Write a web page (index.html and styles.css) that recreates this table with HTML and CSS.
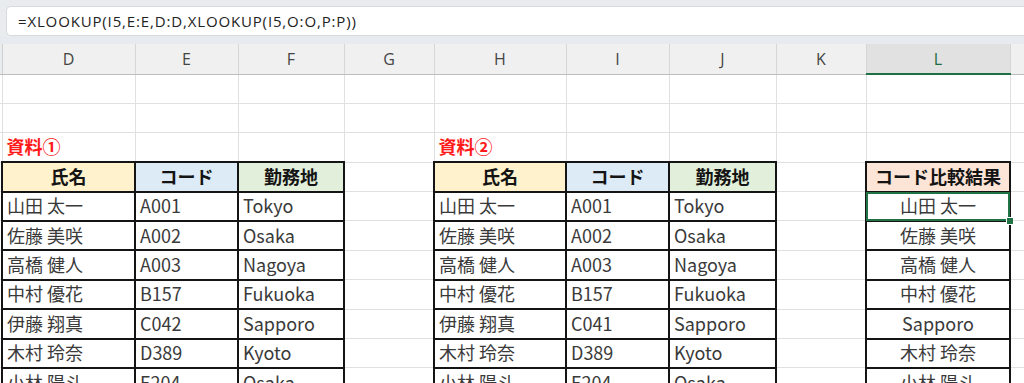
FILE: index.html
```html
<!DOCTYPE html>
<html lang="ja">
<head>
<meta charset="utf-8">
<title>XLOOKUP</title>
<link rel="stylesheet" href="styles.css">
</head>
<body>
<div class="formula-bar"><div class="formula-box">=XLOOKUP(I5,E:E,D:D,XLOOKUP(I5,O:O,P:P))</div></div>
<div class="band"></div>
<table class="sheet">
<colgroup>
<col class="w-edge"><col class="w-d"><col class="w-e"><col class="w-f"><col class="w-g"><col class="w-h"><col class="w-i"><col class="w-j"><col class="w-k"><col class="w-l"><col class="w-m">
</colgroup>
<thead>
<tr><th class="edge"></th><th>D</th><th>E</th><th>F</th><th>G</th><th>H</th><th>I</th><th>J</th><th>K</th><th class="sel">L</th><th></th></tr>
</thead>
<tbody>
<tr><td class="edge"></td><td></td><td></td><td></td><td></td><td></td><td></td><td></td><td></td><td></td><td></td></tr>
<tr><td class="edge"></td><td></td><td></td><td></td><td></td><td></td><td></td><td></td><td></td><td></td><td></td></tr>
<tr><td class="edge"></td><td class="lbl">資料①</td><td></td><td></td><td></td><td class="lbl">資料②</td><td></td><td></td><td></td><td></td><td></td></tr>
<tr><td class="edge"></td><td class="t hd hn">氏名</td><td class="t hd hc">コード</td><td class="t hd hl">勤務地</td><td></td><td class="t hd hn">氏名</td><td class="t hd hc">コード</td><td class="t hd hl">勤務地</td><td></td><td class="t hd hr">コード比較結果</td><td></td></tr>
<tr><td class="edge"></td><td class="t">山田 太一</td><td class="t">A001</td><td class="t">Tokyo</td><td></td><td class="t">山田 太一</td><td class="t">A001</td><td class="t">Tokyo</td><td></td><td class="t c active">山田 太一<div class="sel-box"></div><div class="handle"></div></td><td></td></tr>
<tr><td class="edge"></td><td class="t">佐藤 美咲</td><td class="t">A002</td><td class="t">Osaka</td><td></td><td class="t">佐藤 美咲</td><td class="t">A002</td><td class="t">Osaka</td><td></td><td class="t c">佐藤 美咲</td><td></td></tr>
<tr><td class="edge"></td><td class="t">高橋 健人</td><td class="t">A003</td><td class="t">Nagoya</td><td></td><td class="t">高橋 健人</td><td class="t">A003</td><td class="t">Nagoya</td><td></td><td class="t c">高橋 健人</td><td></td></tr>
<tr><td class="edge"></td><td class="t">中村 優花</td><td class="t">B157</td><td class="t">Fukuoka</td><td></td><td class="t">中村 優花</td><td class="t">B157</td><td class="t">Fukuoka</td><td></td><td class="t c">中村 優花</td><td></td></tr>
<tr><td class="edge"></td><td class="t">伊藤 翔真</td><td class="t">C042</td><td class="t">Sapporo</td><td></td><td class="t">伊藤 翔真</td><td class="t">C041</td><td class="t">Sapporo</td><td></td><td class="t c">Sapporo</td><td></td></tr>
<tr><td class="edge"></td><td class="t">木村 玲奈</td><td class="t">D389</td><td class="t">Kyoto</td><td></td><td class="t">木村 玲奈</td><td class="t">D389</td><td class="t">Kyoto</td><td></td><td class="t c">木村 玲奈</td><td></td></tr>
<tr><td class="edge"></td><td class="t">小林 陽斗</td><td class="t">E204</td><td class="t">Osaka</td><td></td><td class="t">小林 陽斗</td><td class="t">E204</td><td class="t">Osaka</td><td></td><td class="t c">小林 陽斗</td><td></td></tr>
</tbody>
</table>
</body>
</html>
```
FILE: styles.css
```css
html, body {
  margin: 0;
  padding: 0;
}
body {
  width: 1024px;
  height: 383px;
  overflow: hidden;
  background: #ffffff;
  font-family: "Noto Sans CJK JP", sans-serif;
}
.formula-bar {
  height: 36px;
  box-sizing: border-box;
  padding: 6px 0 0 6px;
  background: #e9ecef;
}
.formula-box {
  height: 30px;
  box-sizing: border-box;
  background: #ffffff;
  border: 1px solid #d7dadd;
  border-right: none;
  border-radius: 5px 0 0 5px;
  padding-left: 11px;
  font-family: "Open Sans", sans-serif;
  font-size: 15px;
  letter-spacing: 0.85px;
  line-height: 28px;
  color: #222222;
  white-space: nowrap;
}
.band {
  height: 8px;
  background: #e7eaee;
}
.sheet {
  border-collapse: collapse;
  table-layout: fixed;
  width: 1024px;
}
.w-edge { width: 2px; }
.w-d { width: 133px; }
.w-e { width: 103px; }
.w-f { width: 106px; }
.w-g { width: 90px; }
.w-h { width: 132px; }
.w-i { width: 103px; }
.w-j { width: 107px; }
.w-k { width: 90px; }
.w-l { width: 144px; }
.w-m { width: 14px; }
.sheet th {
  height: 29px;
  padding: 0;
  background: #f0f0f0;
  border-right: 1px solid #d6d6d6;
  border-bottom: 1px solid #bdbdbd;
  font-family: "Open Sans", sans-serif;
  font-weight: normal;
  font-size: 16px;
  color: #444444;
  text-align: center;
  vertical-align: middle;
}
.sheet th.edge {
  background: #e9ecef;
  border-right: 1px solid #cfcfcf;
}
.sheet th.sel {
  background: #e1e1e1;
  color: #1e6b3e;
  border-bottom: 2px solid #1d7044;
}
.sheet tbody tr {
  height: 29.4px;
}
.sheet td {
  border: 1px solid #e0e0e0;
  padding: 0 4px 2px 4px;
  font-size: 18px;
  line-height: 1;
  color: #3a3a3a;
  white-space: nowrap;
  overflow: hidden;
  vertical-align: middle;
}
.sheet td.edge {
  padding: 0;
  border-left: none;
}
.sheet td.lbl {
  color: #ff1a1a;
  font-weight: bold;
  overflow: visible;
  padding-bottom: 3px;
}
.sheet td.t {
  border: 2px solid #141414;
}
.sheet td.hd {
  font-weight: bold;
  text-align: center;
  color: #141414;
}
.hn { background: #fff2cc; }
.hc { background: #ddebf7; }
.hl { background: #e2efda; }
.hr { background: #fce4d6; }
.sheet td.c {
  text-align: center;
}
.sheet td.active {
  position: relative;
  overflow: visible;
}
.sel-box {
  position: absolute;
  left: -1px;
  top: -1px;
  right: -1px;
  bottom: -1px;
  border: 2px solid #217346;
}
.handle {
  position: absolute;
  right: -5px;
  bottom: -5px;
  width: 6px;
  height: 6px;
  background: #217346;
  border: 1px solid #ffffff;
}
```
